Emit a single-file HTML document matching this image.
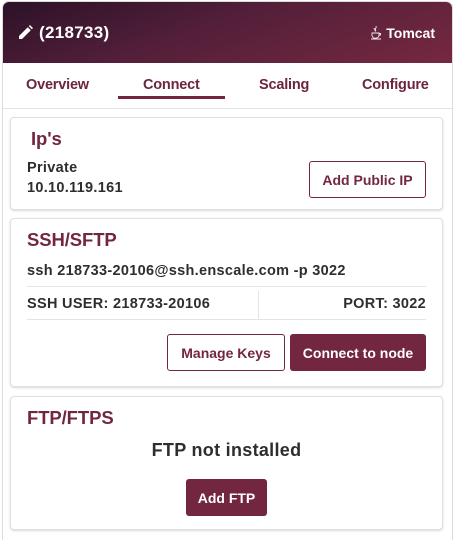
<!DOCTYPE html>
<html><head><meta charset="utf-8"><style>
*{box-sizing:border-box;margin:0;padding:0}
html,body{width:455px;height:540px;overflow:hidden}
body{background:#fff;font-family:"Liberation Sans",sans-serif;font-weight:bold;position:relative;color:#333}
.outer{position:absolute;left:2px;top:1px;width:451px;height:539px;border:1px solid #dcdcdc;border-bottom:none;border-radius:7px 7px 0 0;background:#fff;overflow:hidden}
.hdr{height:61px;background:linear-gradient(160deg,#2c1227 0%,#541f3a 45%,#762840 100%);color:#fff;position:relative}
.hdr .t{position:absolute;left:16px;top:21px;font-size:17px;letter-spacing:0.3px}
.hdr .r{position:absolute;right:17px;top:23px;font-size:14px}
.tabs{height:46px;position:relative;border-bottom:1px solid #e4e4e4;color:#6d2440;font-size:14.5px}
.tabs span{position:absolute;top:14px;letter-spacing:-0.2px}
.uline{position:absolute;left:115px;width:107px;top:33px;height:3px;background:#722640}
.card{position:absolute;left:10px;width:433px;background:#fff;border:1px solid #e0e0e0;border-radius:4px;box-shadow:0 1px 2px rgba(0,0,0,.15)}
.h{color:#722640;font-size:18.5px;position:absolute;letter-spacing:-0.1px}
.txt{position:absolute;font-size:14.5px;color:#2e2e2e;letter-spacing:0.3px}
.btn{position:absolute;height:37px;border-radius:3px;font-size:14px;display:flex;align-items:center;justify-content:center;letter-spacing:0}
.o{border:1px solid #722640;color:#722640;background:#fff}
.f{background:#722640;color:#fff}
</style></head><body>
<div class="outer">
 <div class="hdr">
  <div class="t"><svg width="14" height="14" viewBox="0 0 16 16" style="vertical-align:-1px;margin-right:6px"><path d="M0 16v-3.5L10 2.5l3.5 3.5L3.5 16z M11.2 1.3l1.3-1.3 3.5 3.5-1.3 1.3z" fill="#fff"/></svg>(218733)</div>
  <div class="r"><svg width="10" height="14" viewBox="0 0 10 14" style="vertical-align:-2px;margin-right:5px"><path d="M5 0c1 2-2 3 0 5M3 2c0 1.5 2 2 1 3.5" stroke="#eee" fill="none" stroke-width=".9"/><path d="M1 7h7v2.5a3 3 0 0 1-3 2.5a3 3 0 0 1-4-2.5zM8 7.5h1.5v1.5H8" stroke="#eee" fill="none" stroke-width=".9"/><path d="M0 13h10" stroke="#eee" stroke-width=".9"/></svg>Tomcat</div>
 </div>
 <div class="tabs">
  <span style="left:23px">Overview</span>
  <span style="left:140px">Connect</span>
  <span style="left:256px">Scaling</span>
  <span style="left:359px">Configure</span>
  <div class="uline"></div>
 </div>
</div>
<div class="card" style="top:117px;height:93px">
 <div class="h" style="left:20px;top:10px">Ip's</div>
 <div class="txt" style="left:16px;top:42px">Private</div>
 <div class="txt" style="left:16px;top:62px">10.10.119.161</div>
 <div class="btn o" style="left:298px;top:43px;width:117px">Add Public IP</div>
</div>
<div class="card" style="top:218px;height:169px">
 <div class="h" style="left:16px;top:10px">SSH/SFTP</div>
 <div class="txt" style="left:16px;top:44px">ssh 218733-20106@ssh.enscale.com -p 3022</div>
 <div style="position:absolute;left:16px;right:16px;top:67px;border-top:1px solid #e4e4e4"></div>
 <div class="txt" style="left:16px;top:77px">SSH USER: 218733-20106</div>
 <div style="position:absolute;left:247px;top:72px;height:29px;border-left:1px solid #e4e4e4"></div>
 <div class="txt" style="right:16px;top:77px">PORT: 3022</div>
 <div style="position:absolute;left:16px;right:16px;top:100px;border-top:1px solid #e4e4e4"></div>
 <div class="btn o" style="left:156px;top:115px;width:118px">Manage Keys</div>
 <div class="btn f" style="left:279px;top:115px;width:136px">Connect to node</div>
</div>
<div class="card" style="top:396px;height:134px">
 <div class="h" style="left:16px;top:10px">FTP/FTPS</div>
 <div class="txt" style="left:0;right:0;text-align:center;top:43px;font-size:18px;letter-spacing:0.3px">FTP not installed</div>
 <div class="btn f" style="left:175px;top:82px;width:81px">Add FTP</div>
</div>
</body></html>
